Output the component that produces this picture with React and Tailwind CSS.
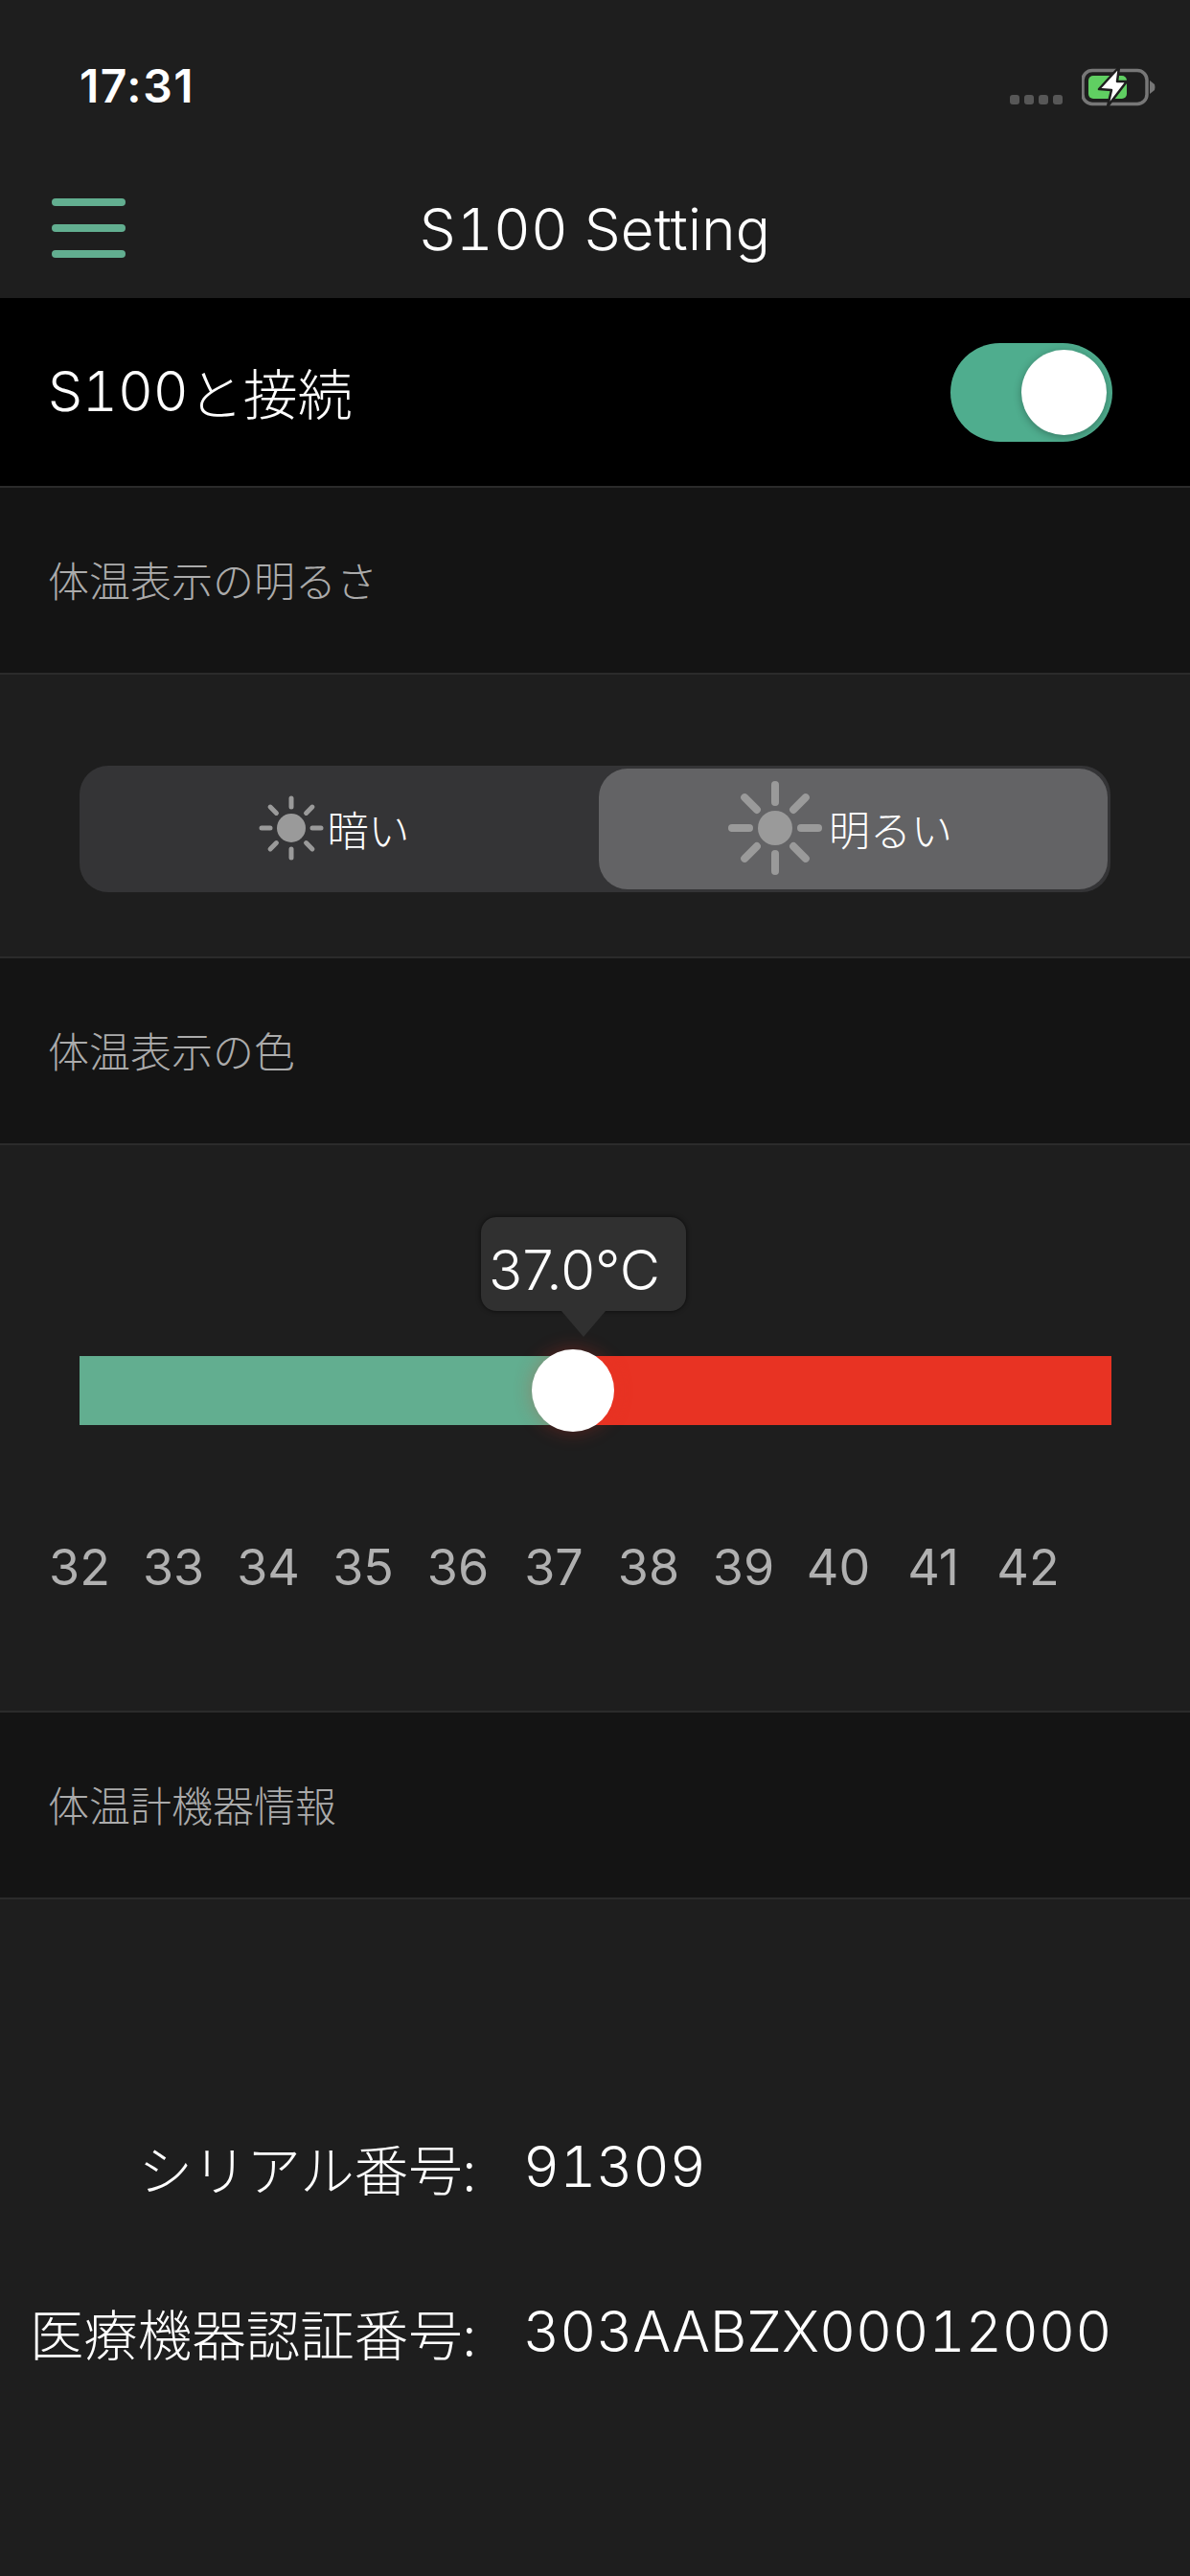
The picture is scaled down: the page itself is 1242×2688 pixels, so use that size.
const latin = 'Inter,"Noto Sans CJK JP",sans-serif';
const jp = '"Noto Sans CJK JP","Liberation Sans",sans-serif';

function Sun({ size, core, inner, outer, w }) {
  const rays = [0, 45, 90, 135, 180, 225, 270, 315];
  return (
    <svg width={size} height={size} viewBox={`${-size / 2} ${-size / 2} ${size} ${size}`} className="shrink-0">
      <circle r={core} fill="#9a9a9a" />
      {rays.map((a) => (
        <line key={a} x1="0" y1={-inner} x2="0" y2={-outer} stroke="#9a9a9a" strokeWidth={w} strokeLinecap="round" transform={`rotate(${a})`} />
      ))}
    </svg>
  );
}

function SectionHeader({ children }) {
  return (
    <div className="h-[197px] shrink-0 flex items-center pl-[50px] pb-[3px] bg-[#141414] border-y-2 border-[#2b2b2b] text-[43px] font-light text-[#ababab]" style={{ fontFamily: jp }}>
      {children}
    </div>
  );
}

const scale = [
  ['32', 83], ['33', 181], ['34', 280], ['35', 379], ['36', 478], ['37', 578], ['38', 677], ['39', 776], ['40', 875], ['41', 974], ['42', 1073],
];

export default function App() {
  return (
    <div className="w-[1242px] h-[2688px] bg-[#1e1e1e] text-white flex flex-col overflow-hidden" style={{ fontFamily: latin }}>
      <header className="h-[311px] shrink-0 flex flex-col">
        <div className="h-[171px] shrink-0 flex justify-between pt-[66px] pl-[83px] pr-[35px]">
          <span className="text-[48px] font-semibold leading-[48px] h-[48px] tracking-[1.5px]">17:31</span>
          <div className="flex items-end gap-[20px] h-[44px]">
            <div className="flex gap-[5px] pb-[1px]">
              <span className="w-[10px] h-[10px] rounded-[3px] bg-[#575757]" />
              <span className="w-[10px] h-[10px] rounded-[3px] bg-[#575757]" />
              <span className="w-[10px] h-[10px] rounded-[3px] bg-[#575757]" />
              <span className="w-[10px] h-[10px] rounded-[3px] bg-[#575757]" />
            </div>
            <svg width="78" height="44" viewBox="0 0 78 44" className="shrink-0 -mb-[1px]">
              <rect x="1" y="6.5" width="67" height="35" rx="10" fill="none" stroke="#777" strokeWidth="3.5" />
              <rect x="7" y="12" width="40" height="24" rx="5" fill="#60cf62" />
              <path d="M71 17 L76 21 Q77 24 76 27 L71 31 Z" fill="#777" />
              <path d="M39 3 L18 26 L31 27 L27 44 L47 18 L37 18 Z" fill="#fff" stroke="#1e1e1e" strokeWidth="2.5" strokeLinejoin="round" />
            </svg>
          </div>
        </div>
        <div className="flex-1 grid grid-cols-[1fr_auto_1fr] items-start">
          <div className="pl-[54px] pt-[36px] flex flex-col gap-[19px]">
            <span className="w-[77px] h-[8px] rounded-full bg-[#62ae90]" />
            <span className="w-[77px] h-[8px] rounded-full bg-[#62ae90]" />
            <span className="w-[77px] h-[8px] rounded-full bg-[#62ae90]" />
          </div>
          <h1 className="text-[60px] font-light tabular-nums tracking-[0.3px] leading-[70px] pt-[33px] h-[103px]">S100 Setting</h1>
          <div />
        </div>
      </header>

      <div className="h-[196px] shrink-0 bg-black flex items-center justify-between pl-[50px] pr-[81px]">
        <span className="text-[57px] font-light tabular-nums flex items-center">S100<span className="text-[57px]" style={{ fontFamily: jp }}>と接続</span></span>
        <div className="w-[169px] h-[103px] rounded-full bg-[#4fad8e] flex items-center justify-end pr-[6px]">
          <span className="w-[89px] h-[89px] rounded-full bg-white shadow-[0_2px_8px_rgba(0,0,0,0.3)]" />
        </div>
      </div>

      <SectionHeader>体温表示の明るさ</SectionHeader>

      <div className="h-[294px] shrink-0 px-[83px] pt-[95px]">
        <div className="w-[1076px] h-[132px] rounded-[30px] bg-[#343436] p-[3px] grid grid-cols-[539px_1fr]">
          <div className="flex items-center justify-center gap-[4px] pr-[14px] pb-[2px] text-[43px] font-light" style={{ fontFamily: jp }}>
            <Sun size={68} core={15} inner={22} outer={31} w={5} />
            <span>暗い</span>
          </div>
          <div className="rounded-[30px] bg-[#636365] flex items-center justify-center gap-[6px] pr-[28px] pb-[2px] text-[43px] font-light" style={{ fontFamily: jp }}>
            <Sun size={100} core={18} inner={27} outer={45} w={8} />
            <span>明るい</span>
          </div>
        </div>
      </div>

      <SectionHeader>体温表示の色</SectionHeader>

      <div className="h-[590px] shrink-0 flex flex-col">
        <div className="relative h-[222px] px-[83px] pt-[220px] shrink-0">
          <div className="flex h-[72px] w-[1077px]">
            <div className="w-[514px] bg-[#62ae90]" />
            <div className="flex-1 bg-[#e83323]" />
          </div>
          <div className="absolute left-[555px] top-[213px] w-[86px] h-[86px] rounded-full bg-white shadow-[0_0_20px_rgba(232,51,35,0.3)]" />
          <div className="absolute left-[502px] top-[75px] w-[214px] h-[98px] rounded-[16px] bg-[#303030] shadow-[0_0_5px_rgba(0,0,0,0.7)] flex items-center pl-[8px] pt-[12px] text-[58px] font-light">37.0°C</div>
          <svg width="46" height="28" viewBox="0 0 46 28" className="absolute left-[586px] top-[173px]">
            <path d="M0 0 L23 27 L46 0 Z" fill="#303030" />
          </svg>
        </div>
        <div className="relative h-[100px] mt-[188px] shrink-0">
          {scale.map(([n, x]) => (
            <span key={n} className="absolute top-[0px] -translate-x-1/2 text-[52px] leading-[62px] font-normal text-[#b0b0b0]" style={{ left: x }}>{n}</span>
          ))}
        </div>
      </div>

      <SectionHeader>体温計機器情報</SectionHeader>

      <div className="flex-1 pt-[238px] text-[56.5px] font-light" style={{ fontFamily: jp }}>
        <div className="grid grid-cols-[497px_1fr] gap-x-[49px] gap-y-[90px] leading-[82px]">
          <span className="text-right">シリアル番号:</span>
          <span className="text-[59px] tabular-nums" style={{ fontFamily: latin }}>91309</span>
          <span className="text-right">医療機器認証番号:</span>
          <span className="text-[59px] tabular-nums" style={{ fontFamily: latin }}>303AABZX00012000</span>
        </div>
      </div>
    </div>
  );
}
